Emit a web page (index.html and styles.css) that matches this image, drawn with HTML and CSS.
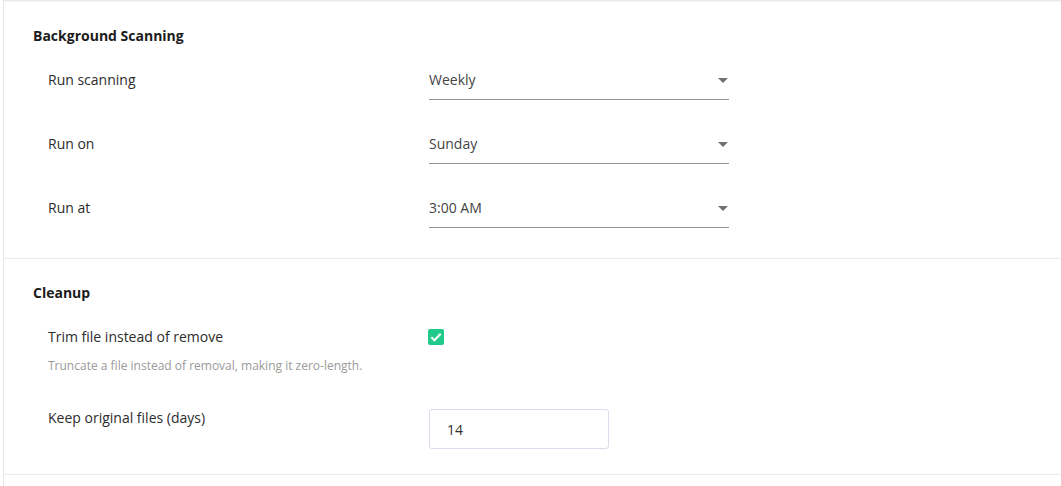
FILE: index.html
```html
<!DOCTYPE html>
<html lang="en">
<head>
    <meta charset="UTF-8">
    <meta name="viewport" content="width=device-width, initial-scale=1.0">
    <title>Settings - Scanning</title>
    <link rel="stylesheet" href="styles.css">
</head>
<body>
    <div class="panel">
        <section class="section">
            <h3>Background Scanning</h3>
            <div class="row">
                <div class="label">Run scanning</div>
                <div class="control">
                    <div class="select">
                        <span>Weekly</span>
                        <span class="caret"></span>
                    </div>
                </div>
            </div>
            <div class="row">
                <div class="label">Run on</div>
                <div class="control">
                    <div class="select">
                        <span>Sunday</span>
                        <span class="caret"></span>
                    </div>
                </div>
            </div>
            <div class="row">
                <div class="label">Run at</div>
                <div class="control">
                    <div class="select">
                        <span>3:00 AM</span>
                        <span class="caret"></span>
                    </div>
                </div>
            </div>
        </section>
        <section class="section cleanup">
            <h3>Cleanup</h3>
            <div class="row">
                <div class="label">
                    Trim file instead of remove
                    <p class="hint">Truncate a file instead of removal, making it zero-length.</p>
                </div>
                <div class="control">
                    <span class="checkbox">
                        <svg width="12" height="12" viewBox="0 0 12 12">
                            <path d="M1.3 6.2 L4.4 9.3 L10.7 2.7" fill="none" stroke="#fff" stroke-width="2"/>
                        </svg>
                    </span>
                </div>
            </div>
            <div class="row">
                <div class="label">Keep original files (days)</div>
                <div class="control">
                    <input class="number" type="text" value="14">
                </div>
            </div>
        </section>
    </div>
</body>
</html>
```

FILE: styles.css
```css
body, html {
    margin: 0;
    padding: 0;
    font-family: "Open Sans", Arial, sans-serif;
    font-size: 14px;
    background-color: #fff;
    color: #2c2c2c;
}

.panel {
    margin-left: 3px;
    padding-top: 2px;
    border-left: 1px solid #e6e6e6;
    box-shadow: inset 0 3px 2px -2px rgba(0, 0, 0, 0.12);
    min-height: 486px;
}

.section {
    padding: 24px 30px 30px 29px;
    border-bottom: 1px solid #ebebeb;
}

.section.cleanup {
    padding-bottom: 25px;
}

.section h3 {
    margin: 0 0 19px 0;
    font-size: 14px;
    font-weight: 700;
    line-height: 20px;
    color: #1c1c1c;
}

.row {
    display: flex;
    align-items: flex-start;
    padding-left: 15px;
    margin-bottom: 29px;
}

.row:last-child {
    margin-bottom: 0;
}

.label {
    width: 381px;
    padding-top: 4px;
    line-height: 22px;
}

.hint {
    margin: 10px 0 0 0;
    font-size: 12px;
    line-height: 16px;
    color: #9a9a9a;
}

.select {
    display: flex;
    justify-content: space-between;
    align-items: center;
    width: 300px;
    padding: 4px 0 8px 0;
    line-height: 22px;
    color: #444;
    border-bottom: 1px solid #949494;
}

.caret {
    width: 0;
    height: 0;
    margin-right: 1px;
    border-left: 5px solid transparent;
    border-right: 5px solid transparent;
    border-top: 5px solid #707070;
}

.checkbox {
    display: flex;
    align-items: center;
    justify-content: center;
    width: 16px;
    height: 16px;
    margin-top: 7px;
    margin-left: -1px;
    border-radius: 2px;
    background-color: #1fca8b;
}

.number {
    box-sizing: border-box;
    width: 180px;
    height: 40px;
    margin-top: 6px;
    padding: 0 17px;
    font-family: inherit;
    font-size: 14px;
    color: #333;
    border: 1px solid #dcdbe9;
    border-radius: 3px;
    outline: none;
}
```
